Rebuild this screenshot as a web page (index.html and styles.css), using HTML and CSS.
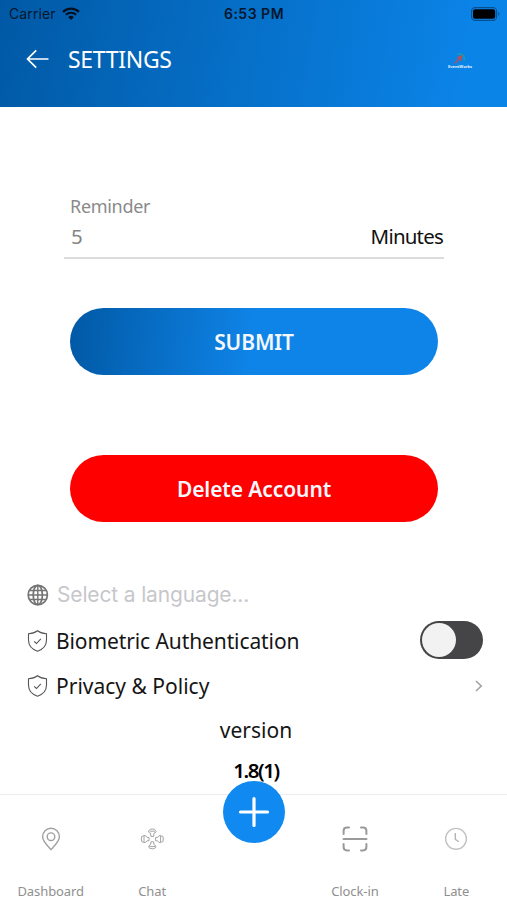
FILE: index.html
```html
<!DOCTYPE html>
<html lang="en">
	<head>
		<title>Settings</title>
		<meta charset="utf-8">
		<meta name="viewport" content="width=device-width, initial-scale=1">
		<link rel="stylesheet" href="styles.css">
	</head>

	<body>
		<div class="screen">
			<header class="header">
				<div class="status-bar">
					<div class="carrier">
						<span>Carrier</span>
						<svg class="wifi" viewBox="0 0 18 13" width="18" height="13">
							<path d="M1 4.8 A11.5 11.5 0 0 1 17 4.8" fill="none" stroke="#04101f" stroke-width="2.3"/>
							<path d="M3.9 7.8 A7.4 7.4 0 0 1 14.1 7.8" fill="none" stroke="#04101f" stroke-width="2.2"/>
							<path d="M9 13 L6.2 10.2 A4 4 0 0 1 11.8 10.2 Z" fill="#04101f"/>
						</svg>
					</div>
					<span class="time">6:53 PM</span>
					<svg class="battery" viewBox="0 0 30 14" width="30" height="14">
						<rect x=".6" y=".6" width="25" height="12.8" rx="3.6" fill="none" stroke="#084f8f" stroke-width="1.1"/>
						<rect x="2" y="2.2" width="22.2" height="9.6" rx="2.2" fill="#000"/>
						<path d="M27.3 4.8 Q29.6 7 27.3 9.2 Z" fill="#084f8f"/>
					</svg>
				</div>
				<div class="title-bar">
					<svg class="back" viewBox="0 0 24 20" width="24" height="20">
						<path d="M23.500 10 H2.500 M11.200 1.300 L2.500 10 L11.200 18.700" fill="none" stroke="#fff" stroke-width="1.7"/>
					</svg>
					<h1 class="title">SETTINGS</h1>
					<div class="logo">
						<svg viewBox="0 0 12 11" width="12" height="11">
							<path d="M3 1.2 Q10.8 -.6 10.2 7.5" fill="none" stroke="#15a6a8" stroke-width="1.3"/>
							<path d="M1 10.3 L7.6 2.8 M3.4 5 L7.6 2.8 L6.8 8" fill="none" stroke="#b8505a" stroke-width="1.5"/>
						</svg>
						<span class="logo-name">EventWorks</span>
					</div>
				</div>
			</header>

			<main class="content">
				<div class="reminder">
					<label class="reminder-label">Reminder</label>
					<div class="reminder-row">
						<span class="reminder-value">5</span>
						<span class="reminder-unit">Minutes</span>
					</div>
				</div>

				<button class="btn btn-submit"><span>SUBMIT</span></button>
				<button class="btn btn-delete"><span>Delete Account</span></button>

				<div class="options">
					<div class="option language">
						<svg class="option-icon" viewBox="0 0 22 22" width="22" height="22" fill="none" stroke="#747474" stroke-width="1.7">
							<circle cx="10.800" cy="11" r="9.600"/>
							<ellipse cx="10.800" cy="11" rx="4.600" ry="9.600"/>
							<path d="M10.800 1.400 V20.600 M1.400 11 H20.400 M2.800 6.500 H18.800 M2.800 15.500 H18.800" stroke-width="1.400"/>
						</svg>
						<span class="placeholder">Select a language...</span>
					</div>
					<div class="option">
						<svg class="option-icon" viewBox="0 0 22 22" width="22" height="22" fill="none" stroke="#555" stroke-width="1.1">
							<path d="M10.500 .8 C8 2.800 5 3.600 1.500 3.700 V10 C1.500 15.800 5 19.300 10.500 21.200 C16 19.300 19.500 15.800 19.500 10 V3.700 C16 3.600 13 2.800 10.500 .8 Z"/>
							<path d="M7.100 11.300 L9.500 13.500 L13.800 8.800"/>
						</svg>
						<span class="option-text">Biometric Authentication</span>
						<span class="toggle"><span class="knob"></span></span>
					</div>
					<div class="option">
						<svg class="option-icon" viewBox="0 0 22 22" width="22" height="22" fill="none" stroke="#555" stroke-width="1.1">
							<path d="M10.500 .8 C8 2.800 5 3.600 1.500 3.700 V10 C1.500 15.800 5 19.300 10.500 21.200 C16 19.300 19.500 15.800 19.500 10 V3.700 C16 3.600 13 2.800 10.500 .8 Z"/>
							<path d="M7.100 11.300 L9.500 13.500 L13.800 8.800"/>
						</svg>
						<span class="option-text policy">Privacy &amp; Policy</span>
						<svg class="chevron" viewBox="0 0 8 12" width="8" height="12">
							<path d="M1 1 L6.200 6 L1 11" fill="none" stroke="#a3a3a3" stroke-width="1.700"/>
						</svg>
					</div>
				</div>

				<div class="version">
					<span class="version-label">version</span>
					<span class="version-number">1.8(1)</span>
				</div>
			</main>

			<nav class="tabs">
				<div class="tab">
					<svg viewBox="0 0 26 26" width="26" height="26" fill="none" stroke="#a0a0a0" stroke-width="1.400">
						<path d="M13 23.500 C9.500 19.800 4.600 15.600 4.600 10.600 A8.400 8.400 0 0 1 21.400 10.600 C21.400 15.600 16.500 19.800 13 23.500 Z"/>
						<circle cx="13" cy="10.700" r="3.800"/>
					</svg>
					<span class="tab-label">Dashboard</span>
				</div>
				<div class="tab">
					<svg viewBox="0 0 26 26" width="26" height="26" fill="none" stroke="#a4a4a4" stroke-width="1">
						<path d="M9.700 6.200 Q8.800 5 10 4.500 Q10.800 3 13.300 3 Q15.800 3 16.600 4.500 Q17.800 5 16.900 6.200 Q16.200 7 15 7.100 L14.700 10.400 H11.900 L11.600 7.100 Q10.400 7 9.700 6.200 Z M10.600 5.200 H16"/>
						<path d="M11.900 15.800 H14.700 L14.900 18.600 Q17.100 19.300 16.900 21.200 Q16.100 22.800 13.300 22.800 Q10.500 22.800 9.700 21.200 Q9.500 19.300 11.700 18.600 Z M10.200 20.600 H16.400"/>
						<path d="M10 11.400 V14.800 H8 Q7 17 4.800 16.600 Q4.300 15.700 2.700 15.700 Q1.900 13 2.700 10.400 Q4.300 10.400 4.800 9.400 Q7 9.200 8 11.400 Z M5 10 V16.200"/>
						<path d="M16.600 11.400 V14.800 H18.600 Q19.600 17 21.800 16.600 Q22.300 15.700 23.900 15.700 Q24.700 13 23.900 10.400 Q22.300 10.400 21.800 9.400 Q19.600 9.200 18.600 11.400 Z M21.600 10 V16.200"/>
					</svg>
					<span class="tab-label">Chat</span>
				</div>
				<div class="tab tab-add">
					<button class="add" aria-label="Add">
						<svg viewBox="0 0 62 62" width="62" height="62">
							<path d="M31 17.500 V44.500 M17.500 31 H44.500" fill="none" stroke="#fff" stroke-width="3.200" stroke-linecap="round"/>
						</svg>
					</button>
				</div>
				<div class="tab">
					<svg viewBox="0 0 26 26" width="26" height="26" fill="none" stroke="#9a9a9a" stroke-width="2" stroke-linecap="round">
						<path d="M1.600 8 V5 Q1.600 1.600 5 1.600 H7 M19 1.600 H21 Q24.400 1.600 24.400 5 V8 M24.400 18 V21 Q24.400 24.400 21 24.400 H19 M7 24.400 H5 Q1.600 24.400 1.600 21 V18"/>
						<path d="M1.600 13 H24.400" stroke-width="2.200"/>
					</svg>
					<span class="tab-label">Clock-in</span>
				</div>
				<div class="tab">
					<svg viewBox="0 0 26 26" width="26" height="26" fill="none" stroke="#c4c4c4" stroke-width="1.400">
						<circle cx="13" cy="12.800" r="10.400"/>
						<path d="M12.300 7 V13.300 L15.800 15.800" stroke="#b5b5b5"/>
					</svg>
					<span class="tab-label">Late</span>
				</div>
			</nav>
		</div>
	</body>
</html>
```

FILE: styles.css
```css
* {
	box-sizing: border-box;
}

body {
	margin: 0;
	background-color: #fff;
	color: #151515;
	font-family: "Noto Sans", "Open Sans", sans-serif;
}

.screen {
	display: flex;
	flex-direction: column;
	height: 900px;
	overflow: hidden;
}

.header {
	height: 107px;
	background-image: linear-gradient(100deg, #0159a5 0%, #0b84e8 92%);
}

.status-bar {
	display: grid;
	grid-template-columns: 1fr auto 1fr;
	align-items: center;
	height: 27px;
	padding: 0 6px 0 9px;
	font-family: Inter, sans-serif;
	font-size: 14px;
	color: #04172d;
}

.carrier {
	display: flex;
	align-items: center;
	gap: 6px;
	letter-spacing: 0.1px;
}

.time {
	margin-right: 2px;
	font-weight: 600;
	letter-spacing: 0.5px;
}

.battery {
	justify-self: end;
}

.title-bar {
	display: flex;
	align-items: center;
	height: 64px;
	padding: 0 34px 0 25px;
}

.title {
	flex: 1;
	margin: 0 0 0 19px;
	color: #fff;
	font-size: 23px;
	font-weight: 400;
	letter-spacing: -0.3px;
}

.logo {
	display: flex;
	flex-direction: column;
	align-items: center;
	width: 26px;
	padding-top: 3px;
}

.logo-name {
	color: #e9f4ff;
	font-size: 4px;
	font-weight: 700;
	line-height: 5px;
}

.content {
	flex: 1;
	display: flex;
	flex-direction: column;
}

.reminder {
	margin: 86px 63px 0 64px;
	padding: 0 0 0 6px;
	height: 66px;
	border-bottom: 2px solid #dcdcdc;
}

.reminder-label {
	display: block;
	color: #8a8a8a;
	font-size: 18px;
	line-height: 27px;
	letter-spacing: -0.3px;
}

.reminder-row {
	display: flex;
	justify-content: space-between;
	font-size: 20.5px;
	line-height: 32px;
}

.reminder-value {
	padding-left: 1px;
	color: #858585;
}

.reminder-unit {
	padding-right: 1px;
	color: #111;
	letter-spacing: -0.8px;
}

.btn {
	height: 67px;
	margin: 0 69px 0 70px;
	padding: 0;
	border: 0;
	border-radius: 34px;
	color: #f4f8fc;
	font-family: inherit;
	font-size: 21px;
	font-weight: 600;
	letter-spacing: -0.1px;
}

.btn-submit {
	margin-top: 49px;
	background-image: linear-gradient(95deg, #0159a5 0%, #0f84e8 50%);
}

.btn-delete {
	margin-top: 80px;
	background-color: #fe0000;
}

.options {
	display: flex;
	flex-direction: column;
	margin-top: 51px;
	padding: 0 24px 0 27px;
}

.option {
	display: flex;
	align-items: center;
	height: 45px;
	font-size: 21px;
	letter-spacing: -0.1px;
}

.language {
	padding-bottom: 2px;
}

.option-icon {
	margin-right: 7px;
}

.placeholder {
	padding-left: 1px;
	color: #c7c7cb;
	font-family: Inter, sans-serif;
	letter-spacing: -0.15px;
}

.option-text {
	flex: 1;
}

.policy {
	letter-spacing: 0;
}

.toggle {
	width: 63px;
	height: 38px;
	margin-bottom: 2px;
	padding: 2px;
	border-radius: 19px;
	background-color: #454547;
}

.knob {
	display: block;
	width: 34px;
	height: 34px;
	border-radius: 50%;
	background-color: #f2f2f2;
}

.version {
	display: flex;
	flex-direction: column;
	align-items: center;
	margin-top: 2px;
	padding-left: 5px;
	font-size: 21px;
	line-height: 40px;
}

.version-number {
	color: #000;
	font-size: 20.5px;
	font-weight: 600;
	letter-spacing: -1.4px;
}

.tabs {
	display: grid;
	grid-template-columns: repeat(5, 1fr);
	height: 106px;
	border-top: 1px solid #ececec;
	background-color: #fff;
}

.tab {
	display: flex;
	flex-direction: column;
	align-items: center;
	justify-content: space-between;
	height: 105px;
	padding: 31px 0 0;
}

.tab-label {
	color: #8f8f8f;
	font-size: 13px;
	line-height: 18px;
	letter-spacing: -0.1px;
}

.tab-add {
	padding: 0 0 0 1px;
}

.add {
	width: 62px;
	height: 62px;
	margin-top: -14px;
	padding: 0;
	border: 0;
	border-radius: 50%;
	background-color: #108af0;
}

.add svg {
	display: block;
}
```
